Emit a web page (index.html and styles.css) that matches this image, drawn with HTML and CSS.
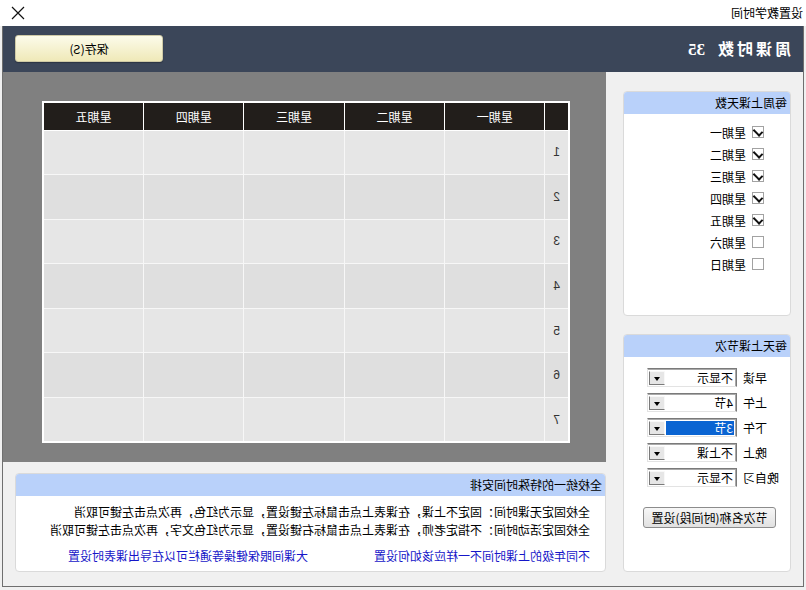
FILE: index.html
```html
<!DOCTYPE html>
<html lang="zh-CN">
<head>
    <meta charset="UTF-8">
    <title>设置教学时间</title>
    <link rel="stylesheet" href="styles.css">
</head>
<body>
    <div class="window">
        <div class="titlebar">
            <span class="title">设置教学时间</span>
            <svg class="close" width="14" height="14" viewBox="0 0 14 14">
                <path d="M1 1 L13 13 M13 1 L1 13" stroke="#111" stroke-width="1.2" fill="none"/>
            </svg>
        </div>

        <div class="frame">
            <div class="header">
                <div class="total"><span class="total-label">周课时数</span><span class="total-num">35</span></div>
                <button class="save">保存(S)</button>
            </div>

            <div class="main">
                <div class="side">
                    <div class="panel days">
                        <div class="panel-title">每周上课天数</div>
                        <div class="day-list">
                            <label class="day"><span class="cb on"></span>星期一</label>
                            <label class="day"><span class="cb on"></span>星期二</label>
                            <label class="day"><span class="cb on"></span>星期三</label>
                            <label class="day"><span class="cb on"></span>星期四</label>
                            <label class="day"><span class="cb on"></span>星期五</label>
                            <label class="day"><span class="cb"></span>星期六</label>
                            <label class="day"><span class="cb"></span>星期日</label>
                        </div>
                    </div>

                    <div class="panel periods">
                        <div class="panel-title">每天上课节次</div>
                        <div class="period-list">
                            <div class="period"><span class="period-name">早读</span><div class="combo"><span class="val">不显示</span><span class="arrow"></span></div></div>
                            <div class="period"><span class="period-name">上午</span><div class="combo"><span class="val">4节</span><span class="arrow"></span></div></div>
                            <div class="period"><span class="period-name">下午</span><div class="combo"><span class="val selected">3节</span><span class="arrow"></span></div></div>
                            <div class="period"><span class="period-name">晚上</span><div class="combo"><span class="val">不上课</span><span class="arrow"></span></div></div>
                            <div class="period"><span class="period-name">晚自习</span><div class="combo"><span class="val">不显示</span><span class="arrow"></span></div></div>
                        </div>
                        <button class="btn-times">节次名称(时间段)设置</button>
                    </div>
                </div>

                <div class="content">
                    <div class="board">
                        <table class="timetable">
                            <thead>
                                <tr><th class="num"></th><th>星期一</th><th>星期二</th><th>星期三</th><th>星期四</th><th>星期五</th></tr>
                            </thead>
                            <tbody>
                                <tr><td class="num">1</td><td></td><td></td><td></td><td></td><td></td></tr>
                                <tr><td class="num">2</td><td></td><td></td><td></td><td></td><td></td></tr>
                                <tr><td class="num">3</td><td></td><td></td><td></td><td></td><td></td></tr>
                                <tr><td class="num">4</td><td></td><td></td><td></td><td></td><td></td></tr>
                                <tr><td class="num">5</td><td></td><td></td><td></td><td></td><td></td></tr>
                                <tr><td class="num">6</td><td></td><td></td><td></td><td></td><td></td></tr>
                                <tr><td class="num">7</td><td></td><td></td><td></td><td></td><td></td></tr>
                            </tbody>
                        </table>
                    </div>

                    <div class="panel notes">
                        <div class="panel-title">全校统一的特殊时间安排</div>
                        <div class="notes-body">
                            <p>全校固定无课时间：固定不上课，在课表上点击鼠标左键设置，显示为红色，再次点击左键可取消</p>
                            <p>全校固定活动时间：不指定老师，在课表上点击鼠标右键设置，显示为红色文字，再次点击左键可取消</p>
                            <div class="links">
                                <a href="#">不同年级的上课时间不一样应该如何设置</a>
                                <a href="#">大课间眼保健操等通栏可以在导出课表时设置</a>
                            </div>
                        </div>
                    </div>
                </div>
            </div>
        </div>
    </div>
</body>
</html>
```

FILE: styles.css
```css
* {
    box-sizing: border-box;
}

body {
    margin: 0;
    font-family: "Noto Sans CJK SC", "Liberation Sans", sans-serif;
    font-size: 12px;
    color: #000;
    background-color: #f0f0f0;
    overflow: hidden;
}

/* ganzes Fenster horizontal gespiegelt */
.window {
    width: 806px;
    height: 590px;
    background-color: #f0f0f0;
    transform: scaleX(-1);
}

.titlebar {
    height: 26px;
    background-color: #fff;
    display: flex;
    align-items: center;
    justify-content: space-between;
    padding: 0 11px 0 3px;
}

.title {
    line-height: 26px;
}

.frame {
    margin: 0 2px;
    height: 561px;
    border: 1px solid #6f6f6f;
    border-top: none;
    display: flex;
    flex-direction: column;
}

.header {
    height: 46px;
    background-color: #3b4659;
    display: flex;
    align-items: center;
    justify-content: space-between;
    padding: 0 12px 0 12px;
    flex-shrink: 0;
}

.total {
    color: #fff;
    font-size: 16px;
    font-weight: bold;
    margin-top: -2px;
}

.total-label {
    letter-spacing: 3px;
}

.total-num {
    margin-left: 10px;
    font-family: "Liberation Serif", serif;
    font-size: 17px;
}

.save {
    width: 148px;
    height: 27px;
    margin-top: -2px;
    font-family: inherit;
    font-size: 12px;
    color: #000;
    background: linear-gradient(#fcfbea, #efe9b8);
    border: 1px solid #cfcaa6;
    border-radius: 3px;
    box-shadow: 0 1px 1px rgba(0, 0, 0, 0.25);
}

.main {
    flex: 1;
    display: flex;
}

.side {
    width: 197px;
    flex-shrink: 0;
    padding: 19px 17px 0 12px;
}

.content {
    flex: 1;
}

/* Panels */
.panel {
    background-color: #fff;
    border: 1px solid #dadada;
    border-radius: 4px;
    overflow: hidden;
}

.panel-title {
    height: 22px;
    line-height: 22px;
    background-color: #b9d1fa;
    padding-left: 3px;
}

.days {
    height: 225px;
}

.day-list {
    padding: 7px 0 0 26px;
}

.day {
    display: flex;
    align-items: center;
    height: 22px;
}

.cb {
    width: 12px;
    height: 12px;
    border: 1px solid #a2a2a2;
    background-color: #fff;
    margin-right: 6px;
    position: relative;
}

.cb.on::after {
    content: "";
    position: absolute;
    left: 2px;
    top: 0px;
    width: 4px;
    height: 7px;
    border: solid #111;
    border-width: 0 2px 2px 0;
    transform: rotate(45deg);
}

.periods {
    height: 238px;
    margin-top: 18px;
}

.period-list {
    padding: 8px 0 0 10px;
}

.period {
    display: flex;
    align-items: center;
    height: 25px;
}

.period-name {
    width: 43px;
    text-align: right;
    padding-right: 6px;
}

.combo {
    width: 90px;
    height: 19px;
    display: flex;
    border: 1px solid;
    border-color: #7a7a7a #e3e3e3 #e3e3e3 #7a7a7a;
    box-shadow: inset 1px 1px 0 #a9a9a9;
    background-color: #fff;
    padding: 2px 1px 1px 2px;
}

.val {
    flex: 1;
    line-height: 14px;
    padding-left: 1px;
}

.val.selected {
    background-color: #0a64d2;
    color: #fff;
}

.arrow {
    width: 16px;
    background-color: #e6e6e6;
    border: 1px solid;
    border-color: #f8f8f8 #7a7a7a #7a7a7a #f8f8f8;
    margin-left: 1px;
    position: relative;
}

.arrow::after {
    content: "";
    position: absolute;
    left: 4px;
    top: 5px;
    border-left: 3px solid transparent;
    border-right: 3px solid transparent;
    border-top: 4px solid #000;
}

.btn-times {
    display: block;
    width: 133px;
    height: 21px;
    margin: 17px 0 0 14px;
    font-family: inherit;
    font-size: 12px;
    color: #000;
    background: linear-gradient(#f7f7f7, #e1e1e1);
    border: 1px solid #8c8c8c;
    border-radius: 3px;
    padding: 0;
}

/* Stundenplan */
.board {
    height: 390px;
    background-color: #808080;
    padding: 29px 39px 0 36px;
}

.timetable {
    width: 528px;
    table-layout: fixed;
    border-collapse: collapse;
    border: 2px solid #fff;
}

.timetable th {
    height: 28px;
    background-color: #221e1b;
    color: #fff;
    font-weight: normal;
    border: 1px solid #fff;
}

.timetable th.num {
    width: 24px;
}

.timetable td {
    height: 44.6px;
    background-color: #e6e6e6;
    border: 1px solid #f7f7f7;
}

.timetable tbody tr:nth-child(even) td {
    background-color: #dfdfdf;
}

.timetable td.num {
    text-align: center;
    font-family: "Liberation Sans", sans-serif;
    color: #333;
}

/* Hinweise */
.notes {
    height: 99px;
    margin: 11px 12px 0 0;
}

.notes-body {
    padding: 7px 0 0 15px;
}

.notes-body p {
    margin: 0;
    line-height: 18px;
}

.links {
    margin-top: 8px;
    display: flex;
}

.links a {
    color: #1616c8;
    text-decoration: none;
    line-height: 18px;
}

.links a + a {
    margin-left: 66px;
}
```
